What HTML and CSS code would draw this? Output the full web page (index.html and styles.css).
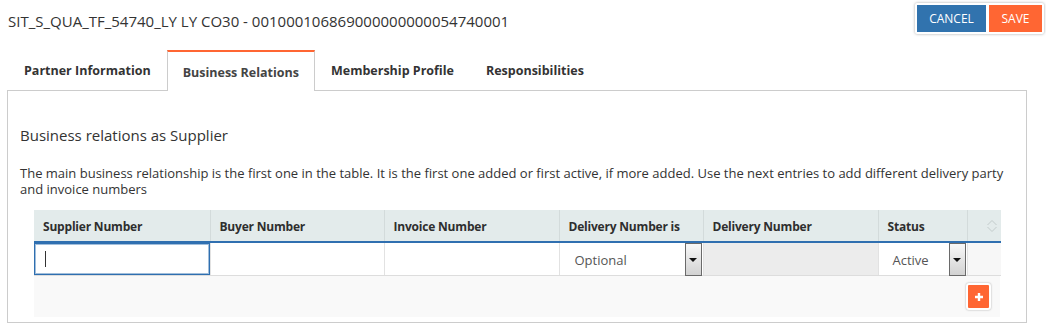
FILE: index.html
```html
<!DOCTYPE html>
<html>
<head>
<meta charset="utf-8">
<link rel="stylesheet" href="styles.css">
</head>
<body>
<div class="page">
  <div class="topbar">
    <div class="title">SIT_S_QUA_TF_54740_LY LY CO30 - 001000106869000000000054740001</div>
    <div class="btn-group">
      <button class="btn btn-cancel">CANCEL</button>
      <button class="btn btn-save">SAVE</button>
    </div>
  </div>
  <div class="tabs">
    <div class="tab">Partner Information</div>
    <div class="tab active">Business Relations</div>
    <div class="tab">Membership Profile</div>
    <div class="tab">Responsibilities</div>
  </div>
  <div class="panel">
    <h2 class="heading">Business relations as Supplier</h2>
    <p class="intro">The main business relationship is the first one in the table. It is the first one added or first active, if more added. Use the next entries to add different delivery party and invoice numbers</p>
    <div class="grid-wrap">
      <table class="grid">
        <colgroup>
          <col class="c1"><col class="c2"><col class="c3"><col class="c4"><col class="c5"><col class="c6"><col class="c7">
        </colgroup>
        <thead>
          <tr>
            <th>Supplier Number</th>
            <th>Buyer Number</th>
            <th>Invoice Number</th>
            <th>Delivery Number is</th>
            <th>Delivery Number</th>
            <th>Status</th>
            <th class="sort-cell">
              <svg class="sort" width="12" height="14" viewBox="0 0 12 14"><path d="M1.5 6 L6 1.5 L10.5 6" fill="none" stroke="#c3cccc" stroke-width="1"/><path d="M1.5 8 L6 12.5 L10.5 8" fill="none" stroke="#c3cccc" stroke-width="1"/></svg>
            </th>
          </tr>
        </thead>
        <tbody>
          <tr>
            <td class="edit"><div class="input"><span class="caret"></span></div></td>
            <td></td>
            <td></td>
            <td class="sel"><div class="select"><span class="sel-text">Optional</span><span class="arrow"><span class="tri"></span></span></div></td>
            <td class="disabled"></td>
            <td class="sel"><div class="select status"><span class="sel-text">Active</span><span class="arrow"><span class="tri"></span></span></div></td>
            <td class="blank"></td>
          </tr>
        </tbody>
      </table>
      <div class="grid-foot">
        <button class="add-btn"><svg width="10" height="10" viewBox="0 0 10 10"><path d="M5 1 V9 M1 5 H9" stroke="#fff" stroke-width="2.4"/></svg></button>
      </div>
    </div>
  </div>
</div>
</body>
</html>
```
FILE: styles.css
```css
* { box-sizing: border-box; }
body {
  margin: 0;
  font-family: "Open Sans", "Liberation Sans", sans-serif;
  color: #333;
  background: #fff;
}
.page {
  padding: 3px 2px 0 7px;
}
.topbar {
  display: flex;
  justify-content: space-between;
  align-items: flex-start;
  height: 47px;
}
.title {
  font-size: 15px;
  line-height: 20px;
  margin-top: 8px;
  padding-left: 1px;
  color: #333;
}
.btn-group {
  display: flex;
  gap: 3px;
  padding: 2px;
  background: #fff;
  box-shadow: 0 0 3px rgba(0,0,0,0.35);
  border-radius: 2px;
}
.btn {
  border: none;
  height: 27px;
  font-family: "Open Sans", "Liberation Sans", sans-serif;
  font-size: 12px;
  color: #fff;
  padding: 0;
  cursor: pointer;
}
.btn-cancel { width: 69px; background: #3173ae; }
.btn-save { width: 53px; background: #ff6633; }

.tabs {
  display: flex;
  height: 40px;
  padding-left: 1px;
}
.tab {
  height: 41px;
  padding: 0 15px;
  border: 1px solid transparent;
  border-bottom: none;
  font-size: 12.5px;
  font-weight: 700;
  line-height: 40px;
  color: #333;
  position: relative;
  z-index: 1;
}
.tab.active {
  border-color: #cccccc;
  border-top: 2px solid #ff6633;
  background: #fff;
  color: #444;
  line-height: 41px;
}
.panel {
  border: 1px solid #cccccc;
  margin-right: 17px;
  padding: 20px 12px 4px;
  min-height: 233px;
}
.heading {
  font-size: 15px;
  font-weight: 400;
  line-height: 20px;
  margin: 14px 0 20px;
  color: #333;
}
.intro {
  font-size: 13px;
  line-height: 16px;
  margin: 0 0 13px;
  color: #333;
}
.grid-wrap {
  margin: 0 14px;
}
.grid {
  border-collapse: collapse;
  table-layout: fixed;
  width: 967px;
}
.c1 { width: 176px; }
.c2 { width: 174px; }
.c3 { width: 175px; }
.c4 { width: 144px; }
.c5 { width: 175px; }
.c6 { width: 89px; }
.c7 { width: 34px; }
.grid th {
  background: #e3ebeb;
  height: 32px;
  padding: 1px 9px 0;
  text-align: left;
  font-size: 12px;
  font-weight: 700;
  letter-spacing: -0.2px;
  color: #2e2e2e;
  border-right: 1px solid #d3dbdb;
  border-bottom: 2px solid #2f6fb0;
}
.grid th:last-child { border-right: none; }
.sort-cell { text-align: center !important; padding: 0 !important; }
.sort { display: block; margin-left: 18px; }
.grid td {
  height: 33px;
  padding: 0;
  border-right: 1px solid #e2e2e2;
  border-bottom: 1px solid #dddddd;
  background: #fff;
}
.grid td:last-child { border-right: none; }
.grid td.disabled { background: #ececec; }
.grid td.blank { background: #f7f7f7; }
.input {
  height: 32px;
  border: 1px solid #2f6fb0;
  box-shadow: inset 0 0 0 1px rgba(47,111,176,0.45);
  display: flex;
  align-items: center;
  padding-left: 10px;
}
.caret {
  width: 1px;
  height: 16px;
  background: #333;
}
.select {
  height: 32px;
  display: flex;
  align-items: center;
  justify-content: space-between;
  font-size: 13px;
  color: #555;
  padding-left: 15px;
  padding-right: 1px;
}
.sel-text { padding-top: 1px; }
.select.status { padding-left: 14px; }
.arrow {
  width: 17px;
  height: 33px;
  border: 1px solid #6a6a6a;
  background: linear-gradient(#f8f8f8, #d2d2d2);
  display: flex;
  align-items: center;
  justify-content: center;
  align-self: flex-start;
}
.tri {
  width: 0;
  height: 0;
  border-left: 4px solid transparent;
  border-right: 4px solid transparent;
  border-top: 4px solid #111;
}
.grid-foot {
  height: 41px;
  background: #f9f9f9;
  display: flex;
  justify-content: flex-end;
  align-items: center;
  padding-right: 9px;
}
.add-btn {
  width: 25px;
  height: 27px;
  padding: 0;
  background: #ff6633;
  border: 2px solid #fff;
  border-radius: 3px;
  box-shadow: 0 0 2px rgba(0,0,0,0.35);
  display: flex;
  align-items: center;
  justify-content: center;
}
```
